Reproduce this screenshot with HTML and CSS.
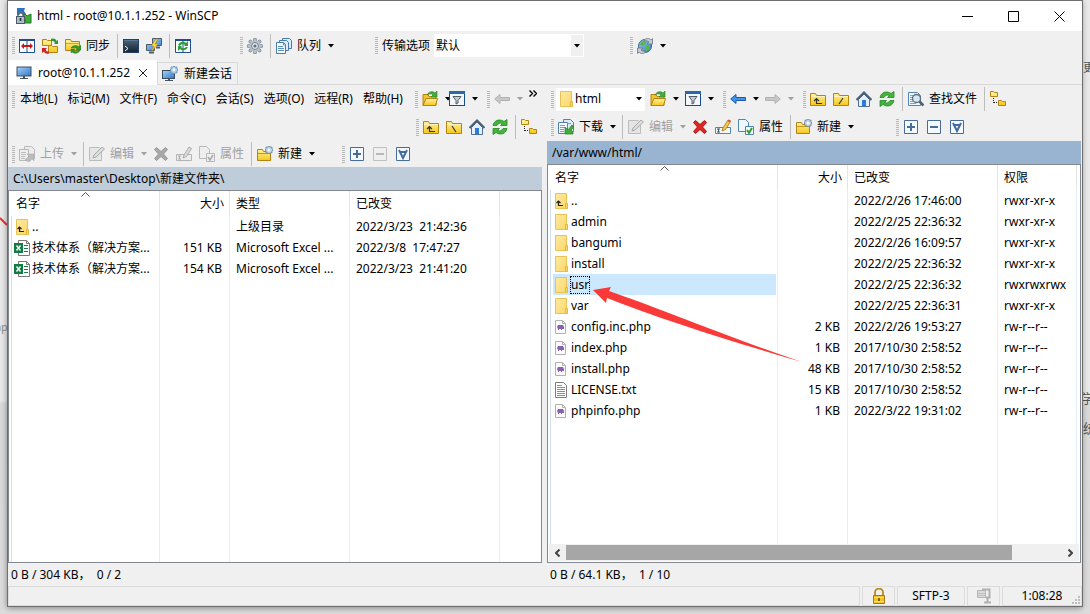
FILE: index.html
```html
<!DOCTYPE html>
<html lang="zh-CN">
<head>
<meta charset="utf-8">
<title>html - root@10.1.1.252 - WinSCP</title>
<link rel="stylesheet" href="styles.css">
</head>
<body class="desktop">
<svg class="sprite" aria-hidden="true">
  <defs>
    <linearGradient id="gy" x1="0" y1="0" x2="0" y2="1"><stop offset="0" stop-color="#fff3a0"/><stop offset="1" stop-color="#f5c61c"/></linearGradient>
    <linearGradient id="gb" x1="0" y1="0" x2="1" y2="1"><stop offset="0" stop-color="#a9d2f8"/><stop offset="1" stop-color="#2f77c8"/></linearGradient>
    <linearGradient id="gf" x1="0" y1="0" x2="1" y2="1"><stop offset="0" stop-color="#ffeaa6"/><stop offset="1" stop-color="#fbd766"/></linearGradient>
    <linearGradient id="gt" x1="0" y1="0" x2="0" y2="1"><stop offset="0" stop-color="#4d6478"/><stop offset="1" stop-color="#14222f"/></linearGradient>
  </defs>
  <symbol id="app" viewBox="0 0 16 16"><path d="M1 0h8L8 3l2 3-2 2-3-3-2 2H1z" fill="#2d72c4"/><path d="M6 9l3-3 2 2 4-2v9H8l2-3z" fill="#3fae36" stroke="#1b7d1d"/><path d="M2 9V7a2.5 2.5 0 015 0v2" fill="none" stroke="#5b6978" stroke-width="1.4"/><rect x=".5" y="8.5" width="8" height="7" fill="#aebac6" stroke="#4c5967"/><path d="M4.5 10v3" stroke="#24303b" stroke-width="1.6"/></symbol>
  <symbol id="panels" viewBox="0 0 16 16"><path d="M.5 1.5h15v13H.5z" fill="#fff" stroke="#1e4f8c"/><path d="M0 2h16M8 1v14" stroke="#1e4f8c" stroke-width="2"/><path d="M8 3v11" stroke="#fff"/><path d="M2 8l3-3v2h6V5l3 3-3 3V9H5v2z" fill="#c4151c"/></symbol>
  <symbol id="syncboth" viewBox="0 0 16 16"><path d="M.5 7.500V1.500h4l1 1h4v5zM6.500 14.500V7.500h3l1 1h5v6z" fill="url(#gy)" stroke="#b48412"/><path d="M9 1c3-1 5 0 5.500 2L16 2v4h-4l1-1c-1-2-2-2-4-2z" fill="#2c9c34"/><path d="M7 15.500c-3 .5-4 0-5-2L0 15v-5h5l-1.500 1.500c1 2 1.500 2 3.500 2z" fill="#cf1f1f"/></symbol>
  <symbol id="sync" viewBox="0 0 16 16"><path d="M.5 12.500V1.500h5l1 2h8v9z" fill="url(#gy)" stroke="#b48412"/><path d="M1 5.500h13" stroke="#d8a81c"/><path d="M6 10c2-3 6-3 8-1l2-2v5h-5l1-1c-2-2-4-1-6-1zM15 12c-1 4-6 4-8 2l-1 1v-4h4l-1 2c2 1 4 0 6-1z" fill="#2f9a2c" stroke="#1d771f" stroke-width=".4"/></symbol>
  <symbol id="console" viewBox="0 0 16 16"><rect x=".5" y="1.500" width="15" height="13" fill="url(#gt)" stroke="#1f4068"/><path d="M1 2.500h14" stroke="#547898"/><path d="M2 8l3 2.500L2 13" fill="none" stroke="#fff"/></symbol>
  <symbol id="putty" viewBox="0 0 16 16"><path d="M6.500.5h9v7h-9zM.5 6.500h8v6h-8z" fill="url(#gb)" stroke="#4c5b6d"/><path d="M3 14.500h5M10 9.500h4" stroke="#4c5b6d" stroke-width="2"/><path d="M10 1L5 8h3l-3 6 7-8H9l3-5z" fill="#ffd83b" stroke="#bd8a10" stroke-width=".6"/></symbol>
  <symbol id="keepsync" viewBox="0 0 16 16"><path d="M.5 1.500h15v13H.5z" fill="#fff" stroke="#1e4f8c"/><path d="M0 2h16M8 1v14" stroke="#1e4f8c" stroke-width="2"/><path d="M8 3v11" stroke="#fff"/><path d="M3 7c2-4 6-4 8-2l2-2v5H9l1-1C8 5 6 6 5 8zM13 9c-2 4-6 4-8 2l-2 2V8h4l-1 1c2 2 4 1 5 0z" fill="#2f9a3c"/></symbol>
  <symbol id="gear" viewBox="0 0 16 16"><path d="M8 1.500v13M1.500 8h13M3.400 3.400l9.200 9.200M12.600 3.400l-9.200 9.200" stroke="#7d8b99" stroke-width="3.600" stroke-linecap="round"/><circle cx="8" cy="8" r="5.500" fill="#b7c1ca"/><path d="M8 1.500v13M1.500 8h13M3.400 3.400l9.200 9.200M12.600 3.400l-9.200 9.200" stroke="#b7c1ca" stroke-width="2" stroke-linecap="round"/><circle cx="8" cy="8" r="3.500" fill="#dde3e8" stroke="#788593"/><circle cx="8" cy="8" r="1.600" fill="#65727e"/></symbol>
  <symbol id="queue" viewBox="0 0 16 16"><path d="M6.500.5h7l2 2v8h-9z" fill="#dcecf9" stroke="#477bab"/><path d="M3.500 2.500h7l2 2v8h-9z" fill="#dcecf9" stroke="#477bab"/><path d="M.5 4.500h7l2 2v9h-9z" fill="#f3f9ff" stroke="#477bab"/><path d="M2 8.500h5M2 10.500h6M2 12.500h6M7.500 5v2h2" stroke="#5a91c2" fill="none"/></symbol>
  <symbol id="globe" viewBox="0 0 16 16"><circle cx="8" cy="8" r="6.500" fill="url(#gb)" stroke="#346594"/><path d="M4 4l4-2 1 3-3 3-3-1zM9 8l4-1-1 5-3 1z" fill="#57b848"/><path d="M7 2c4-3 6-1 7 0l1.500-1.500V6H10l2-2c-1-1-3-1-5-2zM9 14c-4 3-6 1-7 0L.5 15.500V10H6l-2 2c1 1 3 1 5 2z" fill="#c3cbd3" stroke="#697682" stroke-width=".8"/></symbol>
  <symbol id="monitor" viewBox="0 0 16 16"><rect x="1" y="2" width="14" height="9" fill="url(#gb)" stroke="#3c4c60"/><path d="M7 11h2v2H7z" fill="#45525f"/><path d="M4 13.500h8" stroke="#45525f"/></symbol>
  <symbol id="newsession" viewBox="0 0 16 16"><rect x=".5" y="4.500" width="12" height="8" fill="url(#gb)" stroke="#3c4c60"/><path d="M6 12h2v2H6zM3 14h8v1H3z" fill="#45525f"/><path d="M12 0l1 1 2 0v2l1 1-1 1v2h-2l-1 1-1-1H9V5L8 4l1-1V1h2z" fill="#adcbe4" stroke="#5c86aa" stroke-width=".7"/><circle cx="12" cy="4" r="1.400" fill="#fff"/></symbol>
  <symbol id="openfolder" viewBox="0 0 16 16"><path d="M1 14.500V3.500h5l1 2h7v9z" fill="#f2c331" stroke="#b48412"/><path d="M1 14.500l3-7h11.500l-2 7z" fill="url(#gy)" stroke="#b48412"/><path d="M5 4c2-4 6-4 8-2l2-2v6h-6l2-2C9 2 7 3 5 4z" fill="#43ad3b" stroke="#258020" stroke-width=".6"/></symbol>
  <symbol id="filter" viewBox="0 0 16 16"><rect x=".5" y=".5" width="15" height="14" fill="#f1f7fd" stroke="#174c8c"/><path d="M0 1.500h16" stroke="#2869ad" stroke-width="3"/><path d="M4 5.500h8L9 9.500V12l-2 1V9.500z" fill="#c5cbd1" stroke="#565d64"/></symbol>
  <symbol id="back" viewBox="0 0 16 16"><path d="M.7 8L6 3.500V6.500h9.500v3H6v3z" fill="#4295ea" stroke="#1e59aa"/></symbol>
  <symbol id="backoff" viewBox="0 0 16 16"><path d="M.7 8L6 3.500V6.500h9.500v3H6v3z" fill="#c8c8c8" stroke="#b2b2b2"/></symbol>
  <symbol id="fwdoff" viewBox="0 0 16 16"><path d="M15.300 8L10 3.500V6.500H.5v3H10v3z" fill="#c8c8c8" stroke="#b2b2b2"/></symbol>
  <symbol id="dirup" viewBox="0 0 16 16"><path d="M.5 14.500v-12h5l1 2h9v10z" fill="url(#gy)" stroke="#b48412"/><path d="M1 5.500h14" stroke="#fff3b5"/><path d="M6.500 8v4.500H12M4 10l2.500-2.500L9 10" fill="none" stroke="#38352a" stroke-width="1.200"/></symbol>
  <symbol id="dirroot" viewBox="0 0 16 16"><path d="M.5 14.500v-12h5l1 2h9v10z" fill="url(#gy)" stroke="#b48412"/><path d="M1 5.500h14" stroke="#fff3b5"/><path d="M6 7l4 6" stroke="#38352a" stroke-width="1.200"/></symbol>
  <symbol id="dirslash" viewBox="0 0 16 16"><path d="M.5 14.500v-12h5l1 2h9v10z" fill="url(#gy)" stroke="#b48412"/><path d="M1 5.500h14" stroke="#fff3b5"/><path d="M10 7l-4 6" stroke="#38352a" stroke-width="1.200"/></symbol>
  <symbol id="home" viewBox="0 0 16 16"><path d="M2.500 8.500L8 3l5.500 5.500v7h-11z" fill="#e3effa" stroke="#4e7097"/><path d="M.5 9L8 1.500 15.500 9" fill="none" stroke="#4b6076" stroke-width="2"/><path d="M6 9h4v6H6z" fill="#2c7ada"/></symbol>
  <symbol id="refresh" viewBox="0 0 16 16"><path d="M1 6.500C2 1 8-.5 12 2.500L15 .5v6H8.500l2-2C8 3.500 6 4.500 5 6.500zM15 9.500c-1 5.500-7 7-11 4l-3 2v-6h6.500l-2 2c2.500 1 4.500 0 5.500-2z" fill="#45b33c" stroke="#218a24" stroke-width=".8"/></symbol>
  <symbol id="tree" viewBox="0 0 16 16"><path d="M.5 5.500v-5h3l1 1h3v4zM8.500 14.500v-5h3l1 1h3v4z" fill="url(#gy)" stroke="#b48412"/><path d="M3.500 7v5M4 11.500h4" stroke="#222" stroke-dasharray="1 1"/></symbol>
  <symbol id="download" viewBox="0 0 16 16"><path d="M5.500.5h7l3 3v9h-10z" fill="#dcecf9" stroke="#5380aa"/><path d="M.5 3.500h9v11h-9z" fill="#f3f9ff" stroke="#5380aa"/><path d="M2 6.500h5M2 8.500h5M2 10.500h4M2 12.500h4M9 4.500h4" stroke="#71a1cc"/><path d="M14 6l2 2-3 3 2 2v2H7V8l2 2 1 1z" fill="#43ad3b" stroke="#237f22" stroke-width=".7"/></symbol>
  <symbol id="uploadoff" viewBox="0 0 16 16"><path d="M5.500.5h7l3 3v9h-10z" fill="#ececec" stroke="#b8b8b8"/><path d="M.5 3.500h9v11h-9z" fill="#eee" stroke="#b8b8b8"/><path d="M2 6.500h5M2 8.500h5M2 10.500h4M2 12.500h4" stroke="#bbb"/><path d="M6 14l4-4-2-2h7v7l-2-2-3 3z" fill="#bbb" stroke="#aaa" stroke-width=".5"/></symbol>
  <symbol id="editoff" viewBox="0 0 16 16"><path d="M.5 1.500h10l2 2v11H.5z" fill="#e5e5e5" stroke="#bcbcbc"/><path d="M4 12l1-3 8-8 2.500 2-8.500 8z" fill="#ddd" stroke="#aaa"/></symbol>
  <symbol id="delete" viewBox="0 0 16 16"><path d="M1.500 3.500l2-2L8 5.500l4.500-4 2 2L10.500 8l4 4.500-2 2L8 10.500l-4.500 4-2-2 4-4.500z" fill="#df2821" stroke="#a91613"/></symbol>
  <symbol id="deleteoff" viewBox="0 0 16 16"><path d="M1.500 3.500l2-2L8 5.500l4.500-4 2 2L10.500 8l4 4.500-2 2L8 10.500l-4.500 4-2-2 4-4.500z" fill="#a8a8a8" stroke="#999"/></symbol>
  <symbol id="rename" viewBox="0 0 16 16"><path d="M.5 8.500h15v6H.5z" fill="#f5faff" stroke="#5285b4"/><path d="M2 10h3M2 13h3M3.500 10v3" stroke="#334c65"/><path d="M7 12l1-3 5-8 2.500 1.500-5 8z" fill="#f5c94b" stroke="#b58c26"/><path d="M12.500 2L14 .5l1.800 1-.8 2z" fill="#d94d45"/></symbol>
  <symbol id="renameoff" viewBox="0 0 16 16"><path d="M.5 8.500h15v6H.5z" fill="#ededed" stroke="#b5b5b5"/><path d="M2 10h3M2 13h3M3.500 10v3" stroke="#aaa"/><path d="M7 12l1-3 5-8 2.500 1.500-5 8z" fill="#ddd" stroke="#aaa"/></symbol>
  <symbol id="props" viewBox="0 0 16 16"><path d="M.5.500h7l3 3v9H.5z" fill="#eff7fe" stroke="#5285b4"/><path d="M7.500 7.500h8v8h-8z" fill="#f5faff" stroke="#5285b4"/><path d="M9 11l2 3 3-5" fill="none" stroke="#2c9f30" stroke-width="2"/></symbol>
  <symbol id="propsoff" viewBox="0 0 16 16"><path d="M.5.500h7l3 3v9H.5z" fill="#eee" stroke="#b8b8b8"/><path d="M7.500 7.500h8v8h-8z" fill="#eee" stroke="#b8b8b8"/><path d="M9 11l2 3 3-5" fill="none" stroke="#aaa" stroke-width="1.600"/></symbol>
  <symbol id="newfolder" viewBox="0 0 16 16"><path d="M.5 14.500v-11h5l1 2h7v9z" fill="url(#gy)" stroke="#b48412"/><path d="M1 7.500h13" stroke="#c99718"/><path d="M12 0l1 1 2 0v2l1 1-1 1v2h-2l-1 1-1-1H9V5L8 4l1-1V1h2z" fill="#b9d0e3" stroke="#6686a4" stroke-width=".8"/><circle cx="12" cy="4" r="1.500" fill="#fff"/></symbol>
  <symbol id="plus" viewBox="0 0 16 16"><path d="M1.500 1.500h13v13h-13z" fill="#f3f9ff" stroke="#466d9a"/><path d="M4 8h8M8 4v8" stroke="#466d9a" stroke-width="2"/></symbol>
  <symbol id="minus" viewBox="0 0 16 16"><path d="M1.500 1.500h13v13h-13z" fill="#f3f9ff" stroke="#466d9a"/><path d="M4 8h8" stroke="#466d9a" stroke-width="2"/></symbol>
  <symbol id="minusoff" viewBox="0 0 16 16"><path d="M1.500 1.500h13v13h-13z" fill="#efefef" stroke="#c0c0c0"/><path d="M4 8h8" stroke="#b9b9b9" stroke-width="2"/></symbol>
  <symbol id="mask" viewBox="0 0 16 16"><path d="M1.500 1.500h13v13h-13z" fill="#f3f9ff" stroke="#466d9a"/><path d="M4 4l4 8 4-8M5 6h6" fill="none" stroke="#466d9a" stroke-width="2"/></symbol>
  <symbol id="find" viewBox="0 0 16 16"><path d="M.5 1.500h9l3 3v10H.5z" fill="#eff7fe" stroke="#5285b4"/><path d="M2 4.500h4M2 6.500h3M2 8.500h3M2 10.500h3M2 12.500h6" stroke="#79a5cf"/><circle cx="8.500" cy="7.500" r="4" fill="#d5e6f5" stroke="#5e6b79" stroke-width="1.300"/><path d="M11.500 10.500l4 4" stroke="#52606d" stroke-width="2.500"/></symbol>
  <symbol id="folder" viewBox="0 0 16 16"><path d="M2.500.500h11v15h-11z" fill="url(#gf)" stroke="#e8c252"/><path d="M12.500 10.500h2v5h-2z" fill="#fbd766" stroke="#e3b740"/></symbol>
  <symbol id="parent" viewBox="0 0 16 16"><path d="M2.500.500h11v15h-11z" fill="url(#gf)" stroke="#e8c252"/><path d="M12.500 10.500h2v5h-2z" fill="#fbd766" stroke="#e3b740"/><path d="M5.500 8v4.500H10M3.500 10l2-2 2 2" fill="none" stroke="#222" stroke-width="1.200"/></symbol>
  <symbol id="xls" viewBox="0 0 16 16"><path d="M4.500.5h8l3 3v12h-11z" fill="#fff" stroke="#777"/><path d="M12.500.5v3h3" fill="none" stroke="#777"/><path d="M10 5.500h4M10 8.500h4M10 11.500h4" stroke="#17804a"/><path d="M0 3h9v10H0z" fill="#107c41"/><path d="M2.500 5.500l4 5M6.500 5.500l-4 5" stroke="#fff" stroke-width="1.400"/></symbol>
  <symbol id="php" viewBox="0 0 16 16"><path d="M2.500 1.500h7l3 3v10h-10z" fill="#fbfbfb" stroke="#b0b0b0"/><path d="M9.500 1.500v3h3" fill="none" stroke="#b0b0b0"/><path d="M4 8l1-2h5l1 2v2H9v1H8v-1H6v1H5v-1z" fill="#8860b4"/></symbol>
  <symbol id="txt" viewBox="0 0 16 16"><path d="M2.500.500h8l3 3v12h-11z" fill="#fff" stroke="#7c7c7c"/><path d="M4 3.500h5M4 5.500h8M4 7.500h8M4 9.500h8M4 11.500h8M4 13.500h8" stroke="#8b8b8b"/></symbol>
  <symbol id="lock" viewBox="0 0 16 16"><path d="M4 8V4.500a4 4 0 018 0V8" fill="none" stroke="#b78a22" stroke-width="1.800"/><path d="M2.500 7.500h11v8h-11z" fill="#f2c12b" stroke="#a87a16"/><path d="M3 9.500h10M3 13.500h10" stroke="#ffe486"/><path d="M8 10v3" stroke="#5a430c" stroke-width="1.500"/></symbol>
  <symbol id="zip" viewBox="0 0 16 16"><path d="M1.500 2.500h8v7h-8z" fill="#dadada" stroke="#b6b6b6"/><path d="M2 5.500h7M2 7.500h7" stroke="#c0c0c0"/><path d="M6 1.500h7.500v8H10M11.500 10v4M8 14.500h7" fill="none" stroke="#b0b0b0" stroke-width="2"/></symbol>
  <symbol id="caret" viewBox="0 0 6 4"><path d="M0 0h6L3 3.500z" fill="currentColor"/></symbol>
  <symbol id="sort" viewBox="0 0 9 5"><path d="M.5 4.500l4-4 4 4" fill="none" stroke="#555"/></symbol>
</svg>

<div class="scraps" aria-hidden="true"><span class="scrap scrap-a">np</span><span class="scrap scrap-b">更</span><span class="scrap scrap-c">学</span><span class="scrap scrap-d">统</span><svg class="scrap scrap-line" viewBox="0 0 7 9"><path d="M0 1l7 7" stroke="#e33" stroke-width="2"/></svg></div>

<main class="window">
  <header class="titlebar">
    <svg class="icon"><use href="#app"/></svg>
    <h1 class="title">html - root@10.1.1.252 - WinSCP</h1>
    <div class="winbtns">
      <button class="winbtn" aria-label="最小化"><svg viewBox="0 0 11 11"><path d="M0 5.500h11"/></svg></button>
      <button class="winbtn" aria-label="最大化"><svg viewBox="0 0 11 11"><path d="M.5.500h10v10H.5z"/></svg></button>
      <button class="winbtn" aria-label="关闭"><svg viewBox="0 0 11 11"><path d="M.5.500l10 10M10.500.500l-10 10"/></svg></button>
    </div>
  </header>

  <div class="bar bar-main">
    <div class="tools">
      <i class="grip"></i>
      <button class="tool" aria-label="比较"><svg class="icon"><use href="#panels"/></svg></button>
      <button class="tool" aria-label="双向同步"><svg class="icon"><use href="#syncboth"/></svg></button>
      <button class="tool"><svg class="icon"><use href="#sync"/></svg>同步</button>
      <i class="sep"></i>
      <button class="tool" aria-label="终端"><svg class="icon"><use href="#console"/></svg></button>
      <button class="tool" aria-label="PuTTY"><svg class="icon"><use href="#putty"/></svg></button>
      <i class="sep"></i>
      <button class="tool" aria-label="保持更新"><svg class="icon"><use href="#keepsync"/></svg></button>
    </div>
    <div class="tools tools-queue">
      <i class="grip"></i>
      <button class="tool" aria-label="选项"><svg class="icon"><use href="#gear"/></svg></button>
      <i class="sep"></i>
      <button class="tool"><svg class="icon"><use href="#queue"/></svg>队列</button>
      <button class="drop" aria-label="队列菜单"><svg class="caret"><use href="#caret"/></svg></button>
    </div>
    <div class="tools tools-transfer">
      <i class="grip"></i>
      <label class="tool" for="preset">传输选项</label>
      <div class="combo combo-preset"><select id="preset" class="select"><option>默认</option></select><span class="combo-arrow"><svg class="caret"><use href="#caret"/></svg></span></div>
    </div>
    <div class="tools tools-globe">
      <i class="grip"></i>
      <button class="tool" aria-label="检查更新"><svg class="icon"><use href="#globe"/></svg></button>
      <button class="drop" aria-label="更新菜单"><svg class="caret"><use href="#caret"/></svg></button>
    </div>
  </div>

  <nav class="tabs">
    <div class="tab tab-active"><button class="tab-label"><svg class="icon"><use href="#monitor"/></svg>root@10.1.1.252</button><button class="tab-close" aria-label="关闭会话"><svg viewBox="0 0 8 8"><path d="M0 0l8 8M8 0L0 8"/></svg></button></div>
    <button class="tab tab-new"><svg class="icon"><use href="#newsession"/></svg>新建会话</button>
  </nav>

  <div class="panes">
    <section class="pane">
      <div class="bar">
        <div class="tools menu">
          <i class="grip"></i>
          <button class="menu-item">本地(L)</button><button class="menu-item">标记(M)</button><button class="menu-item">文件(F)</button><button class="menu-item">命令(C)</button><button class="menu-item">会话(S)</button><button class="menu-item">选项(O)</button><button class="menu-item">远程(R)</button><button class="menu-item">帮助(H)</button>
        </div>
        <div class="tools tools-near">
          <i class="grip"></i>
          <button class="tool" aria-label="打开目录"><svg class="icon"><use href="#openfolder"/></svg></button>
          <button class="drop drop-tight" aria-label="目录菜单"><svg class="caret"><use href="#caret"/></svg></button>
          <button class="tool tool-tight" aria-label="过滤"><svg class="icon"><use href="#filter"/></svg></button>
          <button class="drop" aria-label="过滤菜单"><svg class="caret"><use href="#caret"/></svg></button>
        </div>
        <div class="tools tools-near">
          <i class="grip"></i>
          <button class="tool off" aria-label="后退"><svg class="icon"><use href="#backoff"/></svg></button>
          <button class="drop off" aria-label="后退菜单"><svg class="caret"><use href="#caret"/></svg></button>
          <button class="more" aria-label="更多"><svg viewBox="0 0 8 7"><path d="M.5.500l3 3-3 3M4.500.500l3 3-3 3"/></svg></button>
        </div>
      </div>
      <div class="bar bar-end">
        <div class="tools">
          <i class="grip"></i>
          <button class="tool" aria-label="上级目录"><svg class="icon"><use href="#dirup"/></svg></button>
          <button class="tool" aria-label="根目录"><svg class="icon"><use href="#dirroot"/></svg></button>
          <button class="tool" aria-label="主目录"><svg class="icon"><use href="#home"/></svg></button>
          <button class="tool" aria-label="刷新"><svg class="icon"><use href="#refresh"/></svg></button>
          <i class="sep"></i>
          <button class="tool" aria-label="目录树"><svg class="icon"><use href="#tree"/></svg></button>
        </div>
      </div>
      <div class="bar bar-low">
        <div class="tools">
          <i class="grip"></i>
          <button class="tool off"><svg class="icon"><use href="#uploadoff"/></svg>上传</button>
          <button class="drop off" aria-label="上传菜单"><svg class="caret"><use href="#caret"/></svg></button>
          <i class="sep"></i>
          <button class="tool off"><svg class="icon"><use href="#editoff"/></svg>编辑</button>
          <button class="drop off" aria-label="编辑菜单"><svg class="caret"><use href="#caret"/></svg></button>
          <button class="tool off" aria-label="删除"><svg class="icon"><use href="#deleteoff"/></svg></button>
          <button class="tool off" aria-label="重命名"><svg class="icon"><use href="#renameoff"/></svg></button>
          <button class="tool off"><svg class="icon"><use href="#propsoff"/></svg>属性</button>
          <i class="sep"></i>
          <button class="tool"><svg class="icon"><use href="#newfolder"/></svg>新建</button>
          <button class="drop" aria-label="新建菜单"><svg class="caret"><use href="#caret"/></svg></button>
        </div>
        <div class="tools tools-select-local">
          <i class="grip"></i>
          <button class="tool" aria-label="选择"><svg class="icon"><use href="#plus"/></svg></button>
          <button class="tool off" aria-label="取消选择"><svg class="icon"><use href="#minusoff"/></svg></button>
          <button class="tool" aria-label="反选"><svg class="icon"><use href="#mask"/></svg></button>
        </div>
      </div>
      <div class="path">C:\Users\master\Desktop\新建文件夹\</div>
      <div class="list">
        <div class="scroll">
        <table class="files">
          <colgroup><col class="c-name-local"><col class="c-size"><col class="c-type"><col class="c-date"></colgroup>
          <thead><tr><th class="first">名字<svg class="sort"><use href="#sort"/></svg></th><th class="num">大小</th><th>类型</th><th>已改变</th></tr></thead>
          <tbody>
            <tr><td class="first"><div class="entry"><svg class="icon"><use href="#parent"/></svg><span>..</span></div></td><td></td><td>上级目录</td><td>2022/3/23&nbsp; 21:42:36</td></tr>
            <tr><td class="first"><div class="entry"><svg class="icon"><use href="#xls"/></svg><span>技术体系（解决方案...</span></div></td><td class="num">151 KB</td><td>Microsoft Excel ...</td><td>2022/3/8&nbsp; 17:47:27</td></tr>
            <tr><td class="first"><div class="entry"><svg class="icon"><use href="#xls"/></svg><span>技术体系（解决方案...</span></div></td><td class="num">154 KB</td><td>Microsoft Excel ...</td><td>2022/3/23&nbsp; 21:41:20</td></tr>
            <tr class="fill"><td class="first"></td><td></td><td></td><td></td></tr>
          </tbody>
        </table>
        </div>
      </div>
      <div class="summary">0 B / 304 KB，  0 / 2</div>
    </section>

    <section class="pane pane-remote">
      <div class="bar">
        <div class="tools">
          <i class="grip"></i>
          <div class="combo combo-dir"><svg class="icon"><use href="#folder"/></svg><select class="select" aria-label="远程目录"><option>html</option></select><span class="combo-arrow"><svg class="caret"><use href="#caret"/></svg></span></div>
          <button class="tool" aria-label="打开目录"><svg class="icon"><use href="#openfolder"/></svg></button>
          <button class="drop" aria-label="目录菜单"><svg class="caret"><use href="#caret"/></svg></button>
          <button class="tool" aria-label="过滤"><svg class="icon"><use href="#filter"/></svg></button>
          <button class="drop" aria-label="过滤菜单"><svg class="caret"><use href="#caret"/></svg></button>
        </div>
        <div class="tools tools-near">
          <i class="grip"></i>
          <button class="tool" aria-label="后退"><svg class="icon"><use href="#back"/></svg></button>
          <button class="drop" aria-label="后退菜单"><svg class="caret"><use href="#caret"/></svg></button>
          <button class="tool off" aria-label="前进"><svg class="icon"><use href="#fwdoff"/></svg></button>
          <button class="drop off" aria-label="前进菜单"><svg class="caret"><use href="#caret"/></svg></button>
        </div>
        <div class="tools tools-near">
          <i class="grip"></i>
          <button class="tool" aria-label="上级目录"><svg class="icon"><use href="#dirup"/></svg></button>
          <button class="tool" aria-label="根目录"><svg class="icon"><use href="#dirslash"/></svg></button>
          <button class="tool" aria-label="主目录"><svg class="icon"><use href="#home"/></svg></button>
          <button class="tool" aria-label="刷新"><svg class="icon"><use href="#refresh"/></svg></button>
          <i class="sep"></i>
          <button class="tool"><svg class="icon"><use href="#find"/></svg>查找文件</button>
          <i class="sep"></i>
          <button class="tool" aria-label="目录树"><svg class="icon"><use href="#tree"/></svg></button>
        </div>
      </div>
      <div class="bar">
        <div class="tools">
          <i class="grip"></i>
          <button class="tool"><svg class="icon"><use href="#download"/></svg>下载</button>
          <button class="drop" aria-label="下载菜单"><svg class="caret"><use href="#caret"/></svg></button>
          <i class="sep"></i>
          <button class="tool off"><svg class="icon"><use href="#editoff"/></svg>编辑</button>
          <button class="drop off" aria-label="编辑菜单"><svg class="caret"><use href="#caret"/></svg></button>
          <button class="tool" aria-label="删除"><svg class="icon"><use href="#delete"/></svg></button>
          <button class="tool" aria-label="重命名"><svg class="icon"><use href="#rename"/></svg></button>
          <button class="tool"><svg class="icon"><use href="#props"/></svg>属性</button>
          <i class="sep"></i>
          <button class="tool"><svg class="icon"><use href="#newfolder"/></svg>新建</button>
          <button class="drop" aria-label="新建菜单"><svg class="caret"><use href="#caret"/></svg></button>
        </div>
        <div class="tools tools-select-remote">
          <i class="grip"></i>
          <button class="tool" aria-label="选择"><svg class="icon"><use href="#plus"/></svg></button>
          <button class="tool" aria-label="取消选择"><svg class="icon"><use href="#minus"/></svg></button>
          <button class="tool" aria-label="反选"><svg class="icon"><use href="#mask"/></svg></button>
        </div>
      </div>
      <div class="path">/var/www/html/</div>
      <div class="list">
        <div class="scroll">
        <table class="files">
          <colgroup><col class="c-name-remote"><col class="c-size"><col class="c-date"><col class="c-perm"></colgroup>
          <thead><tr><th class="first">名字<svg class="sort"><use href="#sort"/></svg></th><th class="num">大小</th><th>已改变</th><th>权限</th></tr></thead>
          <tbody>
            <tr><td class="first"><div class="entry"><svg class="icon"><use href="#parent"/></svg><span>..</span></div></td><td></td><td>2022/2/26 17:46:00</td><td>rwxr-xr-x</td></tr>
            <tr><td class="first"><div class="entry"><svg class="icon"><use href="#folder"/></svg><span>admin</span></div></td><td></td><td>2022/2/25 22:36:32</td><td>rwxr-xr-x</td></tr>
            <tr><td class="first"><div class="entry"><svg class="icon"><use href="#folder"/></svg><span>bangumi</span></div></td><td></td><td>2022/2/26 16:09:57</td><td>rwxr-xr-x</td></tr>
            <tr><td class="first"><div class="entry"><svg class="icon"><use href="#folder"/></svg><span>install</span></div></td><td></td><td>2022/2/25 22:36:32</td><td>rwxr-xr-x</td></tr>
            <tr><td class="first"><div class="entry entry-selected"><svg class="icon"><use href="#folder"/></svg><span class="focus">usr</span></div></td><td></td><td>2022/2/25 22:36:32</td><td>rwxrwxrwx</td></tr>
            <tr><td class="first"><div class="entry"><svg class="icon"><use href="#folder"/></svg><span>var</span></div></td><td></td><td>2022/2/25 22:36:31</td><td>rwxr-xr-x</td></tr>
            <tr><td class="first"><div class="entry"><svg class="icon"><use href="#php"/></svg><span>config.inc.php</span></div></td><td class="num">2 KB</td><td>2022/2/26 19:53:27</td><td>rw-r--r--</td></tr>
            <tr><td class="first"><div class="entry"><svg class="icon"><use href="#php"/></svg><span>index.php</span></div></td><td class="num">1 KB</td><td>2017/10/30 2:58:52</td><td>rw-r--r--</td></tr>
            <tr><td class="first"><div class="entry"><svg class="icon"><use href="#php"/></svg><span>install.php</span></div></td><td class="num">48 KB</td><td>2017/10/30 2:58:52</td><td>rw-r--r--</td></tr>
            <tr><td class="first"><div class="entry"><svg class="icon"><use href="#txt"/></svg><span>LICENSE.txt</span></div></td><td class="num">15 KB</td><td>2017/10/30 2:58:52</td><td>rw-r--r--</td></tr>
            <tr><td class="first"><div class="entry"><svg class="icon"><use href="#php"/></svg><span>phpinfo.php</span></div></td><td class="num">1 KB</td><td>2022/3/22 19:31:02</td><td>rw-r--r--</td></tr>
            <tr class="fill"><td class="first"></td><td></td><td></td><td></td></tr>
          </tbody>
        </table>
        </div>
        <svg class="pointer" viewBox="0 0 209 76" aria-hidden="true"><path d="M0 4L18 1 16 5C60 20 130 49 209 76C140 56 70 34 14 12L13 17z" fill="#f93a38"/></svg>
        <div class="hscroll">
          <button class="hbtn" aria-label="向左"><svg viewBox="0 0 5 8"><path d="M4.500.5L1 4l3.500 3.500"/></svg></button>
          <div class="track"><div class="thumb"></div></div>
          <button class="hbtn" aria-label="向右"><svg viewBox="0 0 5 8"><path d="M.5.500L4 4 .5 7.500"/></svg></button>
        </div>
      </div>
      <div class="summary">0 B / 64.1 KB，  1 / 10</div>
    </section>
  </div>

  <footer class="status">
    <div class="cell cell-wide"></div>
    <div class="cell cell-icon"><svg class="icon"><use href="#lock"/></svg></div>
    <div class="cell cell-proto">SFTP-3</div>
    <div class="cell cell-icon"><svg class="icon"><use href="#zip"/></svg></div>
    <div class="cell cell-time">1:08:28<svg class="sizer" viewBox="0 0 8 8"><path d="M6 0h2v2H6zM3 3h2v2H3zM6 3h2v2H6zM0 6h2v2H0zM3 6h2v2H3zM6 6h2v2H6z" fill="#bfbfbf"/></svg></div>
  </footer>
</main>
</body>
</html>
```

FILE: styles.css
```css
* { box-sizing: border-box; }

.desktop {
  margin: 0;
  min-height: 100vh;
  padding: 0 8px 7px 7px;
  display: flex;
  flex-direction: column;
  position: relative;
  overflow: hidden;
  background: linear-gradient(#e9e9e9 0 400px, #d9d9d9 404px, #dcdcdc);
  color: #000;
  font: 12px/16px "Noto Sans", "Noto Sans CJK SC", sans-serif;
}

.sprite { position: absolute; width: 0; height: 0; }

/* Pieces of the page that shows from behind the window */
.scrap { position: absolute; color: #555; }
.scrap-a { left: -5px; top: 319px; color: #888; font-size: 10px; }
.scrap-b { right: -5px; top: 60px; }
.scrap-c { right: -4px; top: 390px; font-size: 13px; }
.scrap-d { right: -6px; top: 420px; font-size: 13px; }
.scrap-line { left: 0; top: 217px; width: 7px; height: 9px; }

.window {
  flex: 1;
  display: flex;
  flex-direction: column;
  position: relative;
  border: 1px solid #6e6e6e;
  border-right: 0;
  background: #f0f0f0;
  box-shadow: 1px 0 0 #6e6e6e, 0 1px 6px rgba(0, 0, 0, .4);
}

button, select {
  font: inherit;
  color: inherit;
  margin: 0;
  padding: 0;
  border: 0;
  background: none;
}
button { white-space: nowrap; }

.icon { width: 16px; height: 16px; flex: none; display: block; }
.caret { width: 6px; height: 4px; display: block; flex: none; }

.titlebar { display: flex; align-items: center; height: 30px; padding-left: 8px; background: #fff; }
.title { margin: 0 0 0 5px; font: inherit; flex: 1; }
.winbtns { display: flex; }
.winbtn { width: 46px; height: 30px; display: grid; place-items: center; }
.winbtn svg { width: 11px; height: 11px; fill: none; stroke: #000; }

.bar { display: flex; align-items: center; height: 28px; padding-left: 4px; }
.bar-main { height: 29px; }
.bar-low { height: 26px; }
.bar-end { justify-content: flex-end; padding-right: 2px; }

.tools { display: flex; align-items: center; gap: 1px; height: 24px; }
.tools-queue { margin-left: 46px; }
.tools-transfer { margin-left: 39px; }
.tools-globe { margin-left: 46px; }
.tools-near { margin-left: 7px; }
.tools-select-local { margin-left: 25px; }
.tools-select-remote { margin-left: 40px; }

.grip {
  width: 3px;
  height: 17px;
  background: repeating-linear-gradient(#b8b8b8 0 1px, #f0f0f0 1px 2px);
}
.sep { width: 1px; height: 24px; margin: 0 1px 0 3px; background: #bdbdbd; }
.tool { display: flex; align-items: center; gap: 5px; height: 22px; padding: 0 3px; }
.drop { display: flex; align-items: center; height: 22px; padding: 0 2px 0 3px; }
.drop-tight { padding-right: 0; }
.tool-tight { padding-left: 0; margin-left: -3px; }
.off { color: #a0a0a0; }
.more { align-self: flex-start; padding: 3px 0 0 3px; }
.more svg { width: 8px; height: 7px; fill: none; stroke: #000; stroke-width: 1.4; display: block; }

.menu { gap: 0; }
.menu-item { height: 22px; padding: 0 5px; }

.combo { display: flex; align-items: center; height: 23px; background: #fff; }
.combo-preset { width: 150px; padding-left: 2px; padding-right: 1px; }
.combo-dir { width: 89px; margin: 0 1px; padding-left: 2px; }
.select { flex: 1; min-width: 0; height: 21px; appearance: none; outline: 0; }
.combo-arrow { width: 12px; height: 21px; display: grid; place-items: center; background: #f0f0f0; }
.combo-dir .combo-arrow { background: #fff; }
.combo-dir .select { padding-left: 1px; }

.tabs { display: flex; align-items: flex-end; height: 25px; border-bottom: 1px solid #d9d9d9; }
.tab { display: flex; align-items: center; }
.tab-active { height: 25px; margin-bottom: -1px; padding: 0 10px 0 8px; gap: 9px; background: #fff; }
.tab-label { display: flex; align-items: center; gap: 6px; }
.tab-close { padding: 2px 0; }
.tab-close svg { width: 8px; height: 8px; display: block; fill: none; stroke: #222; }
.tab-new { height: 22px; padding: 0 5px 0 4px; gap: 6px; border: 1px solid #d9d9d9; border-bottom: 0; }

.panes { flex: 1; display: grid; grid-template-columns: 1fr 1fr; gap: 5px; padding-right: 1px; }
.pane { display: flex; flex-direction: column; min-width: 0; }
.path { height: 23px; padding: 3px 5px; line-height: 17px; background: #bfcddb; }
.pane-remote .path { background: #99b4d1; }

.list {
  flex: 1;
  display: flex;
  flex-direction: column;
  position: relative;
  border: 1px solid #828790;
  background: #fff;
}
.scroll { flex: 1; display: grid; justify-content: start; padding-left: 2px; overflow: hidden; }

.files { table-layout: fixed; border-collapse: separate; border-spacing: 0; height: 100%; }
.c-name-local { width: 149px; }
.c-name-remote { width: 228px; }
.c-size { width: 70px; }
.c-type { width: 120px; }
.c-date { width: 150px; }
.c-perm { width: 79px; }

.files th {
  position: relative;
  height: 25px;
  padding: 0 5px 0 6px;
  border-right: 1px solid #e5e5e5;
  font-weight: 400;
  text-align: left;
}
.files td {
  height: 21px;
  padding: 0 7px 0 6px;
  border-right: 1px solid #e5effc;
  white-space: nowrap;
}
.files .num { text-align: right; }
.files th.first { padding-left: 5px; }
.files td.first { padding: 0 1px 0 2px; border-left: 1px solid #cfe0f5; }
.files .fill td { height: 100%; }
.sort { position: absolute; top: 1px; left: 50%; width: 9px; height: 5px; margin-left: -4px; }

.entry { display: flex; align-items: center; gap: 2px; height: 21px; }
.entry-selected { background: #cce8ff; }
.focus { outline: 1px dotted #000; }

.pointer { position: absolute; left: 45px; top: 121px; width: 209px; height: 76px; pointer-events: none; }

.hscroll { display: flex; height: 17px; margin: 0 1px 1px; background: #f0f0f0; }
.hbtn { width: 17px; display: grid; place-items: center; }
.hbtn svg { width: 5px; height: 8px; fill: none; stroke: #444; stroke-width: 2; }
.track { flex: 1; padding: 1px 0; }
.thumb { width: 90%; height: 15px; background: #a6a6a6; }

.summary { height: 23px; padding: 4px 3px; white-space: pre; }

.status { display: flex; gap: 2px; height: 20px; }
.cell { display: flex; align-items: center; justify-content: center; border: 1px solid #dcdcdc; }
.cell-wide { flex: 1; }
.cell-icon { width: 33px; }
.cell-proto { width: 68px; }
.cell-time { width: 80px; position: relative; }
.sizer { position: absolute; right: 1px; bottom: 1px; width: 8px; height: 8px; }
```
